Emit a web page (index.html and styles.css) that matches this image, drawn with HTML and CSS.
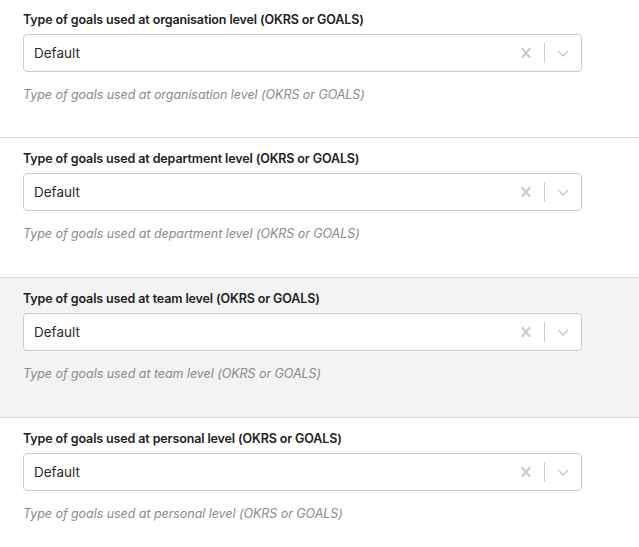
FILE: index.html
```html
<!DOCTYPE html>
<html lang="en">
<head>
<meta charset="utf-8">
<link rel="stylesheet" href="styles.css">
<title>Goal settings</title>
</head>
<body>
<div class="settings">
  <section class="field">
    <div class="label">Type of goals used at organisation level (OKRS or GOALS)</div>
    <div class="select">
      <div class="value">Default</div>
      <div class="indicators">
        <span class="ind"><svg width="20" height="20" viewBox="0 0 20 20"><path d="M14.348 14.849c-0.469 0.469-1.229 0.469-1.697 0l-2.651-3.030-2.651 3.029c-0.469 0.469-1.229 0.469-1.697 0-0.469-0.469-0.469-1.229 0-1.697l2.758-3.15-2.759-3.152c-0.469-0.469-0.469-1.228 0-1.697s1.228-0.469 1.697 0l2.652 3.031 2.651-3.031c0.469-0.469 1.228-0.469 1.697 0s0.469 1.229 0 1.697l-2.758 3.152 2.758 3.15c0.469 0.469 0.469 1.229 0 1.698z"/></svg></span>
        <span class="sep"></span>
        <span class="ind"><svg width="20" height="20" viewBox="0 0 20 20"><path d="M5.5 8.5l4.5 4.3 4.5-4.3" class="chev"/></svg></span>
      </div>
    </div>
    <div class="help">Type of goals used at organisation level (OKRS or GOALS)</div>
  </section>
  <section class="field">
    <div class="label">Type of goals used at department level (OKRS or GOALS)</div>
    <div class="select">
      <div class="value">Default</div>
      <div class="indicators">
        <span class="ind"><svg width="20" height="20" viewBox="0 0 20 20"><path d="M14.348 14.849c-0.469 0.469-1.229 0.469-1.697 0l-2.651-3.030-2.651 3.029c-0.469 0.469-1.229 0.469-1.697 0-0.469-0.469-0.469-1.229 0-1.697l2.758-3.15-2.759-3.152c-0.469-0.469-0.469-1.228 0-1.697s1.228-0.469 1.697 0l2.652 3.031 2.651-3.031c0.469-0.469 1.228-0.469 1.697 0s0.469 1.229 0 1.697l-2.758 3.152 2.758 3.15c0.469 0.469 0.469 1.229 0 1.698z"/></svg></span>
        <span class="sep"></span>
        <span class="ind"><svg width="20" height="20" viewBox="0 0 20 20"><path d="M5.5 8.5l4.5 4.3 4.5-4.3" class="chev"/></svg></span>
      </div>
    </div>
    <div class="help">Type of goals used at department level (OKRS or GOALS)</div>
  </section>
  <section class="field hovered">
    <div class="label">Type of goals used at team level (OKRS or GOALS)</div>
    <div class="select">
      <div class="value">Default</div>
      <div class="indicators">
        <span class="ind"><svg width="20" height="20" viewBox="0 0 20 20"><path d="M14.348 14.849c-0.469 0.469-1.229 0.469-1.697 0l-2.651-3.030-2.651 3.029c-0.469 0.469-1.229 0.469-1.697 0-0.469-0.469-0.469-1.229 0-1.697l2.758-3.15-2.759-3.152c-0.469-0.469-0.469-1.228 0-1.697s1.228-0.469 1.697 0l2.652 3.031 2.651-3.031c0.469-0.469 1.228-0.469 1.697 0s0.469 1.229 0 1.697l-2.758 3.152 2.758 3.15c0.469 0.469 0.469 1.229 0 1.698z"/></svg></span>
        <span class="sep"></span>
        <span class="ind"><svg width="20" height="20" viewBox="0 0 20 20"><path d="M5.5 8.5l4.5 4.3 4.5-4.3" class="chev"/></svg></span>
      </div>
    </div>
    <div class="help">Type of goals used at team level (OKRS or GOALS)</div>
  </section>
  <section class="field">
    <div class="label">Type of goals used at personal level (OKRS or GOALS)</div>
    <div class="select">
      <div class="value">Default</div>
      <div class="indicators">
        <span class="ind"><svg width="20" height="20" viewBox="0 0 20 20"><path d="M14.348 14.849c-0.469 0.469-1.229 0.469-1.697 0l-2.651-3.030-2.651 3.029c-0.469 0.469-1.229 0.469-1.697 0-0.469-0.469-0.469-1.229 0-1.697l2.758-3.15-2.759-3.152c-0.469-0.469-0.469-1.228 0-1.697s1.228-0.469 1.697 0l2.652 3.031 2.651-3.031c0.469-0.469 1.228-0.469 1.697 0s0.469 1.229 0 1.697l-2.758 3.152 2.758 3.15c0.469 0.469 0.469 1.229 0 1.698z"/></svg></span>
        <span class="sep"></span>
        <span class="ind"><svg width="20" height="20" viewBox="0 0 20 20"><path d="M5.5 8.5l4.5 4.3 4.5-4.3" class="chev"/></svg></span>
      </div>
    </div>
    <div class="help">Type of goals used at personal level (OKRS or GOALS)</div>
  </section>
</div>
</body>
</html>
```

FILE: styles.css
```css
html, body {
  margin: 0;
  padding: 0;
  background: #ffffff;
}

body {
  font-family: Inter, "Liberation Sans", sans-serif;
  color: #1f1f1f;
}

.settings {
  display: flex;
  flex-direction: column;
}

.field {
  box-sizing: border-box;
  height: 140px;
  padding: 12px 57px 0 23px;
  border-bottom: 1px solid #dcdcdc;
  display: flex;
  flex-direction: column;
}

.field:first-child {
  height: 138px;
  padding-top: 11px;
}

.field:last-child {
  border-bottom: none;
}

.field.hovered {
  background: #f3f3f3;
}

.label {
  font-size: 12.5px;
  line-height: 18px;
  font-weight: 600;
  color: #222222;
  letter-spacing: -0.125px;
}

.select {
  box-sizing: border-box;
  margin-top: 5px;
  height: 38px;
  border: 1px solid #cccccc;
  border-radius: 4px;
  background: #ffffff;
  display: flex;
  align-items: center;
}

.value {
  flex: 1;
  padding: 0 10px;
  font-size: 13.5px;
  color: #2b2b2b;
}

.indicators {
  display: flex;
  align-items: center;
  align-self: stretch;
}

.ind {
  display: flex;
  padding: 8px;
  color: #cccccc;
}

.ind svg {
  fill: currentColor;
}

.ind .chev {
  fill: none;
  stroke: currentColor;
  stroke-width: 1.6;
  stroke-linecap: round;
  stroke-linejoin: round;
}

.sep {
  align-self: stretch;
  width: 1px;
  margin: 8px 0;
  background: #cccccc;
}

.help {
  margin-top: 14px;
  font-size: 12.5px;
  line-height: 18px;
  font-style: italic;
  color: #8a8a8a;
  letter-spacing: -0.05px;
}
```
